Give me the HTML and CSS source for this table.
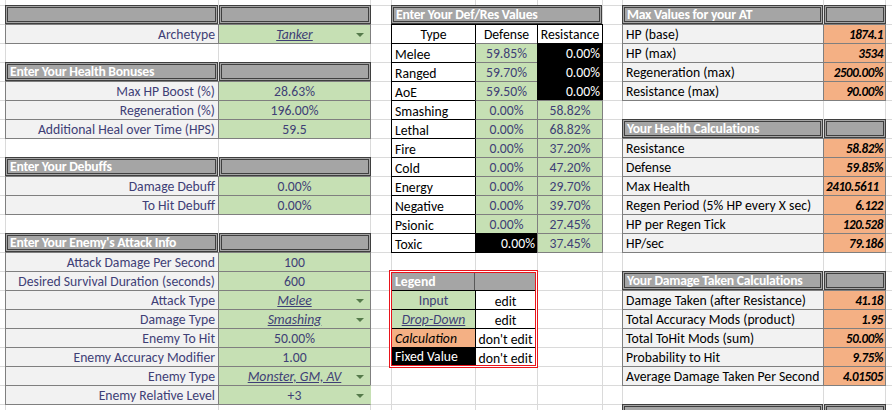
FILE: index.html
```html
<!DOCTYPE html>
<html>
<head>
<meta charset="utf-8">
<title>Survival Calculator</title>
<link rel="stylesheet" href="styles.css">
</head>
<body>
<div class="sheet">
  <section class="left">
    <div class="c hdr"></div><div class="c hdr"></div>
    <div class="c lbl">Archetype</div><div class="c inp arrow"><span class="u">Tanker</span></div>
    <div class="gap"></div>
    <div class="c hdr">Enter Your Health Bonuses</div><div class="c hdr"></div>
    <div class="c lbl">Max HP Boost (%)</div><div class="c inp">28.63%</div>
    <div class="c lbl">Regeneration (%)</div><div class="c inp">196.00%</div>
    <div class="c lbl">Additional Heal over Time (HPS)</div><div class="c inp">59.5</div>
    <div class="gap"></div>
    <div class="c hdr">Enter Your Debuffs</div><div class="c hdr"></div>
    <div class="c lbl">Damage Debuff</div><div class="c inp">0.00%</div>
    <div class="c lbl">To Hit Debuff</div><div class="c inp">0.00%</div>
    <div class="gap"></div>
    <div class="c hdr">Enter Your Enemy's Attack Info</div><div class="c hdr"></div>
    <div class="c lbl">Attack Damage Per Second</div><div class="c inp">100</div>
    <div class="c lbl">Desired Survival Duration (seconds)</div><div class="c inp">600</div>
    <div class="c lbl">Attack Type</div><div class="c inp arrow"><span class="u">Melee</span></div>
    <div class="c lbl">Damage Type</div><div class="c inp arrow"><span class="u">Smashing</span></div>
    <div class="c lbl">Enemy To Hit</div><div class="c inp">50.00%</div>
    <div class="c lbl">Enemy Accuracy Modifier</div><div class="c inp">1.00</div>
    <div class="c lbl">Enemy Type</div><div class="c inp arrow"><span class="u">Monster, GM, AV</span></div>
    <div class="c lbl">Enemy Relative Level</div><div class="c inp arrow last">+3</div>
  </section>

  <section class="mid">
    <div class="c hdr span3">Enter Your Def/Res Values</div>
    <div class="c th">Type</div><div class="c th">Defense</div><div class="c th">Resistance</div>
    <div class="c ty">Melee</div><div class="c def">59.85%</div><div class="c blk">0.00%</div>
    <div class="c ty">Ranged</div><div class="c def">59.70%</div><div class="c blk">0.00%</div>
    <div class="c ty">AoE</div><div class="c def">59.50%</div><div class="c blk">0.00%</div>
    <div class="c ty">Smashing</div><div class="c def">0.00%</div><div class="c res">58.82%</div>
    <div class="c ty">Lethal</div><div class="c def">0.00%</div><div class="c res">68.82%</div>
    <div class="c ty">Fire</div><div class="c def">0.00%</div><div class="c res">37.20%</div>
    <div class="c ty">Cold</div><div class="c def">0.00%</div><div class="c res">47.20%</div>
    <div class="c ty">Energy</div><div class="c def">0.00%</div><div class="c res">29.70%</div>
    <div class="c ty">Negative</div><div class="c def">0.00%</div><div class="c res">39.70%</div>
    <div class="c ty">Psionic</div><div class="c def">0.00%</div><div class="c res">27.45%</div>
    <div class="c ty">Toxic</div><div class="c blk">0.00%</div><div class="c res">37.45%</div>
  </section>

  <section class="legend">
    <div class="lg-in">
      <div class="lc lg-h1">Legend</div><div class="lc lg-h2"></div>
      <div class="lc lg-a inp-t">Input</div><div class="lc lg-b">edit</div>
      <div class="lc lg-a inp-t"><span class="u">Drop-Down</span></div><div class="lc lg-b">edit</div>
      <div class="lc lg-a calc-t">Calculation</div><div class="lc lg-b">don't edit</div>
      <div class="lc lg-a fix-t">Fixed Value</div><div class="lc lg-b">don't edit</div>
    </div>
  </section>

  <section class="right">
    <div class="c hdr">Max Values for your AT</div><div class="c hdr"></div>
    <div class="c rl">HP (base)</div><div class="c rv">1874.1</div>
    <div class="c rl">HP (max)</div><div class="c rv">3534</div>
    <div class="c rl">Regeneration (max)</div><div class="c rv">2500.00%</div>
    <div class="c rl">Resistance (max)</div><div class="c rv">90.00%</div>
    <div class="gap"></div>
    <div class="c hdr">Your Health Calculations</div><div class="c hdr"></div>
    <div class="c rl">Resistance</div><div class="c rv">58.82%</div>
    <div class="c rl">Defense</div><div class="c rv">59.85%</div>
    <div class="c rl">Max Health</div><div class="c rv clip">2410.5611</div>
    <div class="c rl">Regen Period (5% HP every X sec)</div><div class="c rv">6.122</div>
    <div class="c rl">HP per Regen Tick</div><div class="c rv">120.528</div>
    <div class="c rl">HP/sec</div><div class="c rv">79.186</div>
    <div class="gap"></div>
    <div class="c hdr">Your Damage Taken Calculations</div><div class="c hdr"></div>
    <div class="c rl">Damage Taken (after Resistance)</div><div class="c rv">41.18</div>
    <div class="c rl">Total Accuracy Mods (product)</div><div class="c rv">1.95</div>
    <div class="c rl">Total ToHit Mods (sum)</div><div class="c rv">50.00%</div>
    <div class="c rl">Probability to Hit</div><div class="c rv">9.75%</div>
    <div class="c rl">Average Damage Taken Per Second</div><div class="c rv">4.01505</div>
    <div class="gap"></div>
    <div class="c hdr"></div><div class="c hdr"></div>
  </section>
</div>
</body>
</html>
```

FILE: styles.css
```css
* { box-sizing: border-box; }
html, body { margin: 0; padding: 0; background: #fff; }
body {
  font-family: Calibri, Carlito, Lato, "Liberation Sans", sans-serif;
  font-size: 13.7px;
  color: #000;
}

.sheet {
  width: 892px;
  height: 410px;
  overflow: hidden;
  display: grid;
  grid-template-columns: 5px 213px 152px 21px 84px 62px 65px 20px 201px 62px 1fr;
  grid-template-rows: 5px repeat(21, 19px) 1fr;
  background:
    linear-gradient(#dadada, #dadada) 5px 0 / 1px 100% no-repeat,
    linear-gradient(#dadada, #dadada) 218px 0 / 1px 100% no-repeat,
    linear-gradient(#dadada, #dadada) 370px 0 / 1px 100% no-repeat,
    linear-gradient(#dadada, #dadada) 391px 0 / 1px 100% no-repeat,
    linear-gradient(#dadada, #dadada) 475px 0 / 1px 100% no-repeat,
    linear-gradient(#dadada, #dadada) 537px 0 / 1px 100% no-repeat,
    linear-gradient(#dadada, #dadada) 602px 0 / 1px 100% no-repeat,
    linear-gradient(#dadada, #dadada) 622px 0 / 1px 100% no-repeat,
    linear-gradient(#dadada, #dadada) 823px 0 / 1px 100% no-repeat,
    linear-gradient(#dadada, #dadada) 885px 0 / 1px 100% no-repeat,
    linear-gradient(#dadada 1px, transparent 1px) 0 5px / 100% 19px,
    #fff;
}

/* sections */
.left {
  grid-column: 2 / 4;
  grid-row: 2 / 23;
  display: grid;
  grid-template-columns: 213px 152px;
  grid-auto-rows: 19px;
}
.mid {
  grid-column: 5 / 8;
  grid-row: 2 / 15;
  display: grid;
  grid-template-columns: 84px 62px 65px;
  grid-auto-rows: 19px;
}
.right {
  grid-column: 9 / 11;
  grid-row: 2 / 24;
  display: grid;
  grid-template-columns: 201px 62px;
  grid-auto-rows: 19px;
}
.gap { grid-column: 1 / -1; }

/* cells */
.c {
  display: flex;
  align-items: center;
  padding: 0 3px;
  white-space: nowrap;
  overflow: hidden;
  min-width: 0;
  margin: 0 -1px -1px 0;
}
.hdr {
  background: #a5a5a5;
  border: 3px double #3f3f3f;
  color: #fff;
  font-weight: 700;
  letter-spacing: -0.25px;
  margin: 0;
  padding: 0 2px;
}
.hdr + .hdr { margin: 0 -1px 0 1px; }
.span3 { grid-column: 1 / -1; margin: 0; }

.lbl {
  background: #f2f2f2;
  border: 1px solid #7f7f7f;
  color: #3f3f76;
  justify-content: flex-end;
}
.inp {
  background: #c6e0b4;
  border: 1px solid #7f7f7f;
  color: #3f3f76;
  justify-content: center;
  position: relative;
}
.inp.last { border-right-color: #c6e0b4; }
.u { font-style: italic; text-decoration: underline; }
.arrow::after {
  content: "";
  position: absolute;
  right: 6px;
  top: 8px;
  border-left: 4px solid transparent;
  border-right: 4px solid transparent;
  border-top: 4px solid #557a4a;
}

/* def/res table */
.th {
  background: #fff;
  border: 1px solid #000;
  justify-content: center;
}
.ty {
  background: #fff;
  border: 1px solid #000;
  padding-top: 3px;
}
.def, .res {
  background: #c6e0b4;
  border: 1px solid #7f7f7f;
  color: #3f3f76;
  justify-content: center;
}
.def { border-left-color: #000; }
.blk {
  background: #000;
  border: 1px solid #000;
  color: #fff;
  justify-content: flex-end;
  padding-right: 2px;
}

/* legend */
.legend {
  grid-column: 5 / 7;
  grid-row: 16 / 21;
  margin: -1px -1px -2px -2px;
  border: 1px solid #e8141b;
  padding: 1px;
  background: #fff;
}
.lg-in {
  height: 100%;
  border: 1px solid #e8141b;
  display: grid;
  grid-template-columns: 83px 1fr;
  grid-template-rows: 17px 19px 19px 19px 1fr;
}
.lc {
  display: flex;
  align-items: center;
  white-space: nowrap;
  overflow: hidden;
  padding: 0 3px;
}
.lg-h1 {
  background: #a5a5a5;
  color: #fff;
  font-weight: 700;
  border-right: 1px solid #595959;
}
.lg-h2 { background: #a5a5a5; }
.lg-a { border-top: 1px solid #000; }
.lg-b {
  border-top: 1px solid #000;
  border-left: 1px solid #000;
  justify-content: center;
  padding: 3px 1px 0;
}
.inp-t { background: #c6e0b4; color: #3f3f76; justify-content: center; }
.calc-t { background: #f4b084; font-style: italic; }
.fix-t { background: #000; color: #fff; }

/* right calculations */
.rl {
  background: #f2f2f2;
  border: 1px solid #7f7f7f;
}
.rv {
  background: #f4b084;
  border: 1px solid #7f7f7f;
  justify-content: flex-end;
  font-size: 13px;
  font-weight: 700;
  font-style: italic;
  letter-spacing: -0.4px;
  padding-right: 2px;
}
.rv.clip { justify-content: flex-start; padding-left: 2px; }
```
